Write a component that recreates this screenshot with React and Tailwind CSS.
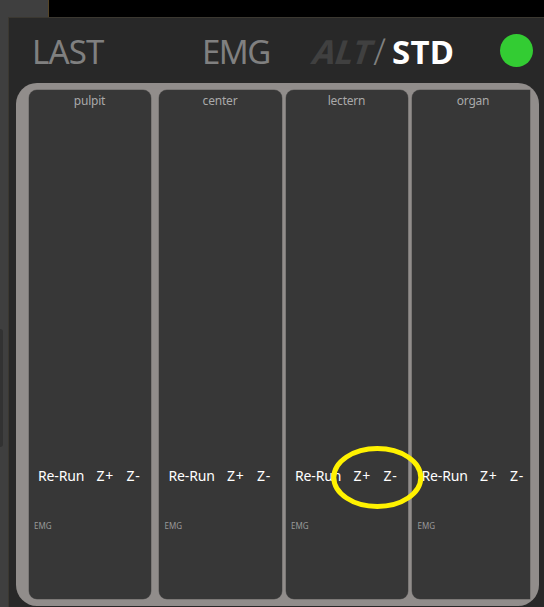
const columns = [
  { name: 'pulpit', shell: 'w-[122.5px] rounded-[8px]' },
  { name: 'center', shell: 'ml-[8px] w-[122.5px] rounded-[8px]' },
  { name: 'lectern', shell: 'ml-[4px] w-[122.5px] rounded-[8px]' },
  { name: 'organ', shell: 'ml-[4px] w-[118px] rounded-l-[8px]' },
];

function Column({ name, shell }) {
  return (
    <section className={`${shell} flex h-[509px] shrink-0 flex-col overflow-hidden bg-[#373737] shadow-[0_0_0_0.5px_#666463]`}>
      <h2 className="w-[122px] pt-[3px] text-center text-[12px] leading-4 tracking-[-0.2px] text-[#a9a9a9]">{name}</h2>
      <div className="mt-[357px] flex h-5 w-[122px] shrink-0 items-center whitespace-nowrap pl-[9.5px] text-[14px] leading-5 text-white">
        <span className="w-[58.5px] tracking-[-0.15px]">Re-Run</span>
        <span className="w-[30px] tracking-[0.7px]">Z+</span>
        <span className="tracking-[0.7px]">Z-</span>
      </div>
      <span className="mt-[35px] pl-[5.5px] text-[8px] leading-[10px] text-[#999999]">EMG</span>
    </section>
  );
}

export default function App() {
  return (
    <div className="relative flex h-[607px] w-[544px] flex-col overflow-hidden bg-[#3f3f3f] font-['Noto_Sans','Open_Sans',sans-serif]">
      <div className="flex h-[17px] shrink-0">
        <div className="w-[48px]" />
        <div className="flex-1 border-l border-[#564526] bg-black" />
      </div>
      <div className="flex min-h-0 flex-1">
        <div className="flex w-[8px] shrink-0 pt-[312px]">
          <div className="h-[118px] w-[3px] rounded-r-[3px] bg-[#323232]" />
        </div>
        <main className="flex w-[536px] flex-col border-l border-t border-[#3b3831] bg-[#282828]">
          <header className="flex h-[65px] shrink-0 items-center whitespace-nowrap text-[33px] leading-[44px] text-[#808080]">
            <span className="ml-[23px] w-[170px] pt-[2px] tracking-[-0.8px]">LAST</span>
            <span className="w-[109px] pt-[2px] tracking-[-1.5px]">EMG</span>
            <span className="w-[62px] pt-[2px] font-bold tracking-[-0.6px] text-[#404040]">
              <span className="ml-[3px] inline-block -skew-x-[18deg]">ALT</span>
            </span>
            <span className="w-[19px] pt-[2px] pl-[1px]"><span className="inline-block -skew-x-3 scale-y-[1.12] font-light">/</span></span>
            <span className="w-[107.5px] pt-[2px] font-bold tracking-[0.3px] text-white">STD</span>
            <span className="size-[33px] shrink-0 rounded-full bg-[#33cc33]" />
          </header>
          <div className="ml-[7px] flex h-[523px] w-[523px] shrink-0 rounded-[21px] bg-[#918d8b] pl-[12.5px] pt-[7px]">
            {columns.map((column) => <Column key={column.name} {...column} />)}
          </div>
        </main>
      </div>
      <svg className="pointer-events-none absolute left-[330px] top-[444px]" width="96" height="68" viewBox="0 0 96 68" fill="none" aria-hidden="true">
        <ellipse cx="47.3" cy="33.5" rx="43.5" ry="29" stroke="#fff200" strokeWidth="5" />
      </svg>
    </div>
  );
}
